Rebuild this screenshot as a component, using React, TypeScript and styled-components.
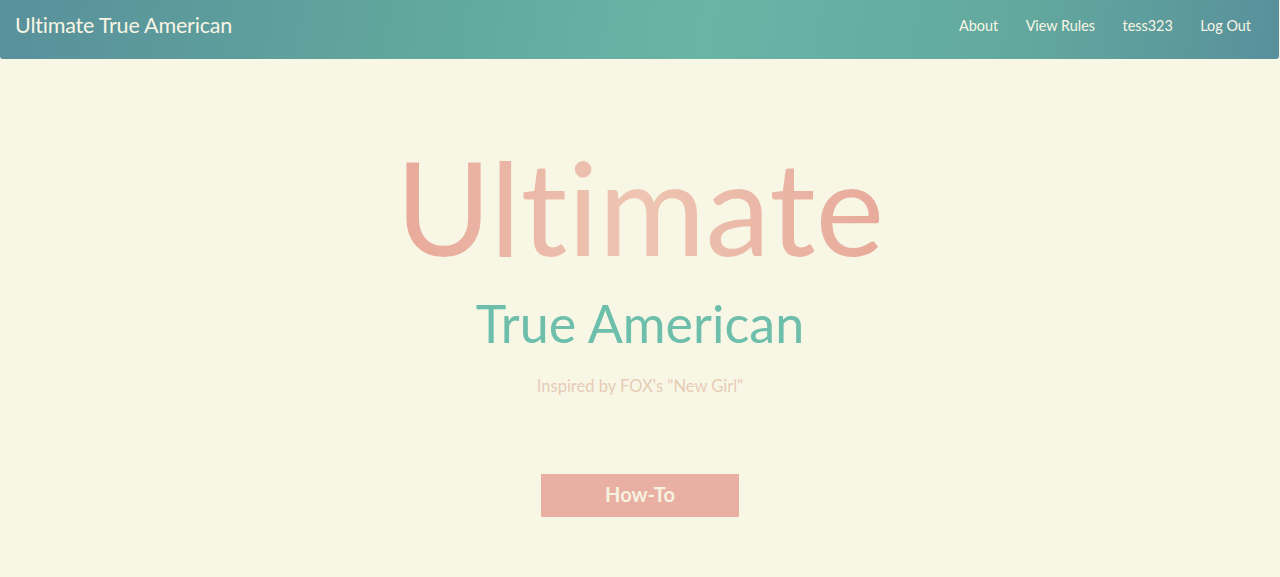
import React from "react";
import styled, { createGlobalStyle } from "styled-components";

const Global = createGlobalStyle`
  html, body { margin: 0; padding: 0; background: #f8f7e6; }
  body { font-family: Lato, "Open Sans", sans-serif; }
  * { box-sizing: border-box; }
`;

const Page = styled.div`
  min-height: 577px;
  background: #f8f7e6;
`;

const NavBar = styled.nav`
  height: 59px;
  margin-right: 1px;
  border-radius: 0 0 3px 3px;
  background: linear-gradient(100deg, #58909b 0%, #62a99d 35%, #6ab4a6 55%, #62a89e 80%, #58909b 100%);
  display: flex;
  align-items: center;
  justify-content: space-between;
  padding: 0 28px 9px 15px;
`;

const Brand = styled.a`
  color: #f8f5e4;
  font-size: 21.5px;
  font-weight: 400;
  letter-spacing: -0.2px;
  text-decoration: none;
`;

const Links = styled.div`
  display: flex;
  gap: 27.5px;
  align-items: center;
`;

const NavLink = styled.a`
  color: #f8f5e4;
  font-size: 14.4px;
  text-decoration: none;
`;

const Hero = styled.main`
  display: flex;
  flex-direction: column;
  align-items: center;
  padding-top: 72px;
`;

const Title = styled.h1`
  margin: 0;
  font-size: 130px;
  font-weight: 400;
  line-height: 150px;
  font-variant-ligatures: none;
  font-feature-settings: "liga" 0, "dlig" 0;
  background: linear-gradient(90deg, #e8a99a 0%, #eec5b2 50%, #e8aa9b 100%);
  -webkit-background-clip: text;
  background-clip: text;
  color: transparent;
`;

const Subtitle = styled.h2`
  margin: 11px 0 0;
  font-size: 52px;
  font-weight: 400;
  line-height: 62px;
  color: #6dbeaa;
`;

const Tagline = styled.p`
  margin: 22px 0 0;
  font-size: 16.5px;
  line-height: 20px;
  color: #e7ccb6;
`;

const Button = styled.button`
  margin-top: 78px;
  width: 198px;
  height: 43px;
  padding: 0 0 3px;
  border: none;
  background: #e9afa2;
  color: #f8f3e0;
  font-family: Lato, sans-serif;
  font-size: 20px;
  font-weight: 700;
  cursor: pointer;
`;

export default function App() {
  return (
    <Page>
      <Global />
      <NavBar>
        <Brand>Ultimate True American</Brand>
        <Links>
          <NavLink>About</NavLink>
          <NavLink>View Rules</NavLink>
          <NavLink>tess323</NavLink>
          <NavLink>Log Out</NavLink>
        </Links>
      </NavBar>
      <Hero>
        <Title>Ultimate</Title>
        <Subtitle>True American</Subtitle>
        <Tagline>Inspired by FOX's "New Girl"</Tagline>
        <Button>How-To</Button>
      </Hero>
    </Page>
  );
}
